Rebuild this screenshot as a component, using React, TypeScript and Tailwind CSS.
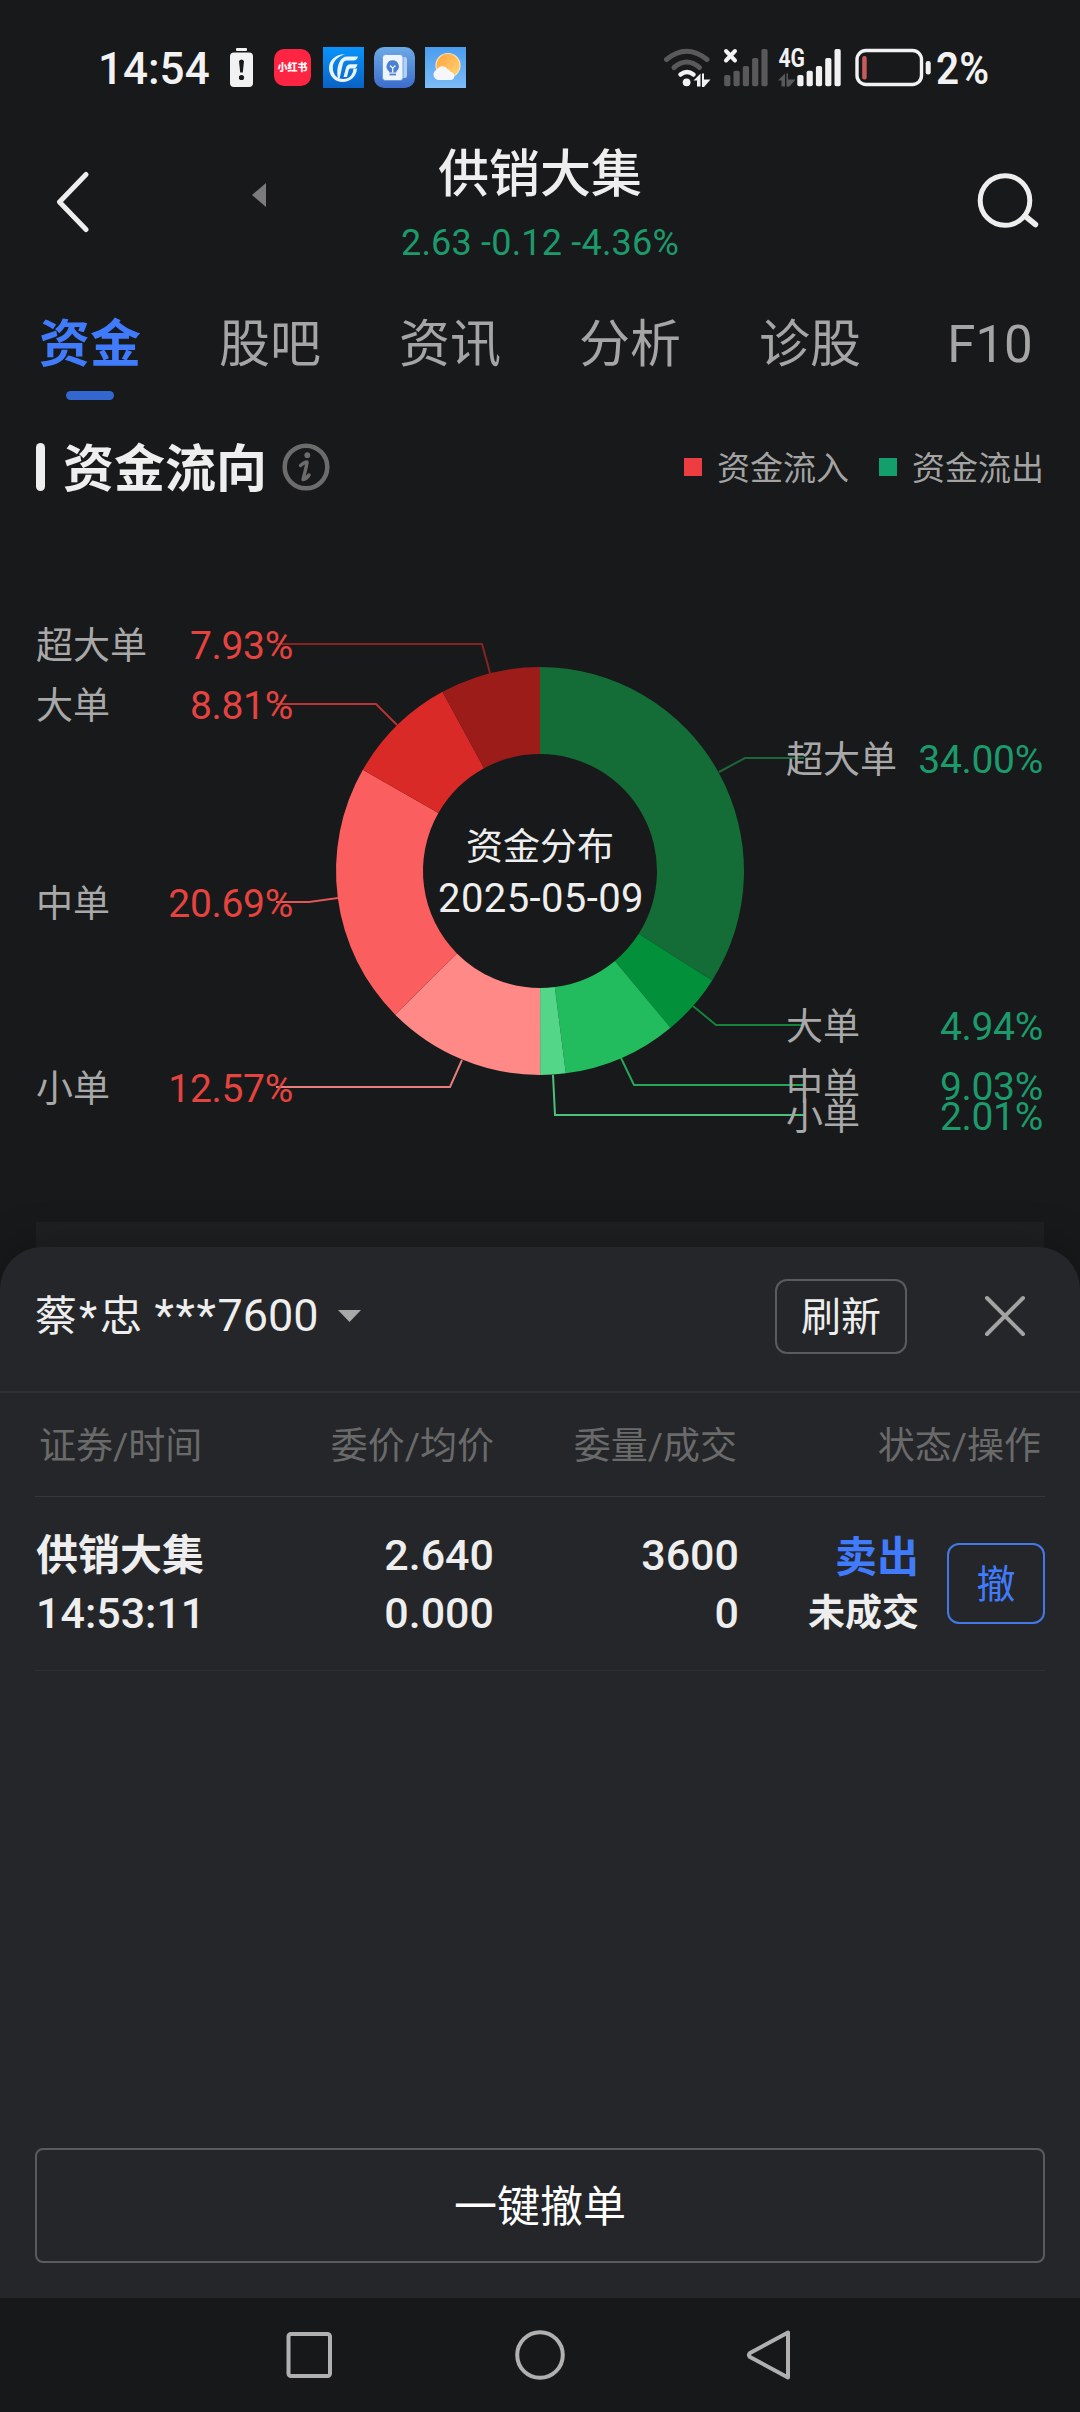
interface Slice {
  label: string;
  value: number;
  color: string;
  line: string;
  labelY: number;
  points: string;
}

const outflow: Slice[] = [
  { label: "超大单", value: 34.0, color: "#146c36", line: "#1c6638", labelY: 758, points: "719,772 745,758 804,758" },
  { label: "大单", value: 4.94, color: "#02913a", line: "#15833b", labelY: 1025, points: "693,1006 716,1025 804,1025" },
  { label: "中单", value: 9.03, color: "#22bb5e", line: "#27a658", labelY: 1085, points: "621,1058 634,1085 804,1085" },
  { label: "小单", value: 2.01, color: "#53d688", line: "#4fbf7c", labelY: 1115, points: "553,1075 555,1115 804,1115" },
];

const inflow: Slice[] = [
  { label: "小单", value: 12.57, color: "#ff8987", line: "#e57e7c", labelY: 1087, points: "462,1060 450,1087 276,1087" },
  { label: "中单", value: 20.69, color: "#fb5e5e", line: "#df5757", labelY: 902, points: "338,898 309,902 276,902" },
  { label: "大单", value: 8.81, color: "#d92a27", line: "#b93433", labelY: 704, points: "397,725 376,704 276,704" },
  { label: "超大单", value: 7.93, color: "#9c1c1a", line: "#842423", labelY: 644, points: "490,673 482,644 276,644" },
];

const tabs = ["资金", "股吧", "资讯", "分析", "诊股", "F10"];

const CX = 540;
const CY = 871;
const OUTER = 204;
const INNER = 117;

const point = (r: number, angle: number) =>
  `${(CX + r * Math.sin(angle)).toFixed(2)} ${(CY - r * Math.cos(angle)).toFixed(2)}`;

const arcPath = (start: number, end: number) => {
  const large = end - start > Math.PI ? 1 : 0;
  return `M${point(OUTER, start)} A${OUTER} ${OUTER} 0 ${large} 1 ${point(OUTER, end)} L${point(INNER, end)} A${INNER} ${INNER} 0 ${large} 0 ${point(INNER, start)} Z`;
};

function SignalBars({ x, color }: { x: number; color: string }) {
  const tops = [28, 23.7, 19, 11, 2];
  return (
    <g fill={color}>
      {tops.map((top, i) => (
        <rect key={top} x={x + i * 9.3} y={top} width="6.2" height={39.2 - top} rx="1.8" />
      ))}
    </g>
  );
}

function StatusBar() {
  return (
    <div className="flex h-[135px] items-center justify-between pl-[98px] pr-[90px]">
      <div className="flex items-center">
        <span className="w-[132px] pt-[2px] text-[44px] font-medium leading-none text-[#f2f2f2]">
          14:54
        </span>
        <svg className="h-[41px] w-[23px]" viewBox="0 0 23 41">
          <rect x="6" y="1" width="11" height="3" rx="1" fill="#f2f2f2" />
          <rect x="0" y="5.5" width="23" height="34.5" rx="4" fill="#f2f2f2" />
          <path d="M9 14q2.500-3 5 0l-1.200 11.500h-2.600z" fill="#17191a" />
          <circle cx="11.500" cy="30.500" r="2.600" fill="#17191a" />
        </svg>
        <div className="ml-[21px] flex h-[37px] w-[37px] items-center justify-center rounded-[10px] bg-[#fe2543] text-[10px] font-black leading-none text-white">
          小红书
        </div>
        <svg className="ml-3 h-[41px] w-[41px]" viewBox="0 0 41 41">
          <defs>
            <linearGradient id="brand" x1="0" y1="0" x2="0" y2="1">
              <stop offset="0" stopColor="#0a94fb" />
              <stop offset="1" stopColor="#0a62c4" />
            </linearGradient>
          </defs>
          <rect width="41" height="41" fill="url(#brand)" />
          {/* crescent, then the strokes of the mark */}
          <path
            d="M22 7.200C13 7 6 13 6 21c0 8 6 14 13.500 14 8 0 14-5.500 14.500-13.500h-3.500C30 28 26 32 20.500 32 14 32 9.800 27.500 9.800 20.500 9.800 14.500 14.500 9.500 22 7.200z"
            fill="#e8f4ff"
          />
          <path d="M15 31c-1.500-6-.5-12.500 2-17 1.700-3 4-4.500 7-4.500h11c-.6 2.800-2 3.900-4.500 3.900h-6.500c-2.600 0-3.600 1.400-4.300 4L16.700 31z" fill="#e8f4ff" />
          <path d="M20.500 30l2.300-8.500c.8-2.800 2-4.200 4.800-4.200h6.900c-.5 2.800-1.800 4.200-4.300 4.200h-2.400c-1.300 0-1.900.6-2.200 2L24 30z" fill="#e8f4ff" />
        </svg>
        <svg className="ml-[10px] h-[41px] w-[41px]" viewBox="0 0 41 41">
          <defs>
            <linearGradient id="tips" x1="0" y1="0" x2="0" y2="1">
              <stop offset="0" stopColor="#6caae6" />
              <stop offset="1" stopColor="#3c6ccb" />
            </linearGradient>
          </defs>
          <rect width="41" height="41" rx="10" fill="url(#tips)" />
          <rect x="25" y="10" width="8" height="21" rx="2.500" fill="#b5d0f2" />
          <rect x="8.500" y="7.500" width="20.500" height="26" rx="3" fill="#eef4fd" stroke="#5a92db" strokeWidth="0.800" />
          <path d="M18.700 13.200a6.200 6.200 0 0 0-3.600 11.200v1.100h7.200v-1.100a6.200 6.200 0 0 0-3.600-11.200z" fill="#4b80d3" />
          <path d="M16 18.500l2.700 2.700 2.700-2.700M18.700 21v4.500" stroke="#eef4fd" strokeWidth="1.300" fill="none" />
          <path d="M15.500 27.500h6.500" stroke="#4b80d3" strokeWidth="1.800" />
        </svg>
        <svg className="ml-[10px] h-[41px] w-[41px]" viewBox="0 0 41 41">
          <defs>
            <linearGradient id="sky" x1="0" y1="0" x2="0" y2="1">
              <stop offset="0" stopColor="#4a9df0" />
              <stop offset="1" stopColor="#7dbcf7" />
            </linearGradient>
            <linearGradient id="sun" x1="0" y1="0" x2="1" y2="1">
              <stop offset="0" stopColor="#ff9f3d" />
              <stop offset="1" stopColor="#ffd873" />
            </linearGradient>
          </defs>
          <rect width="41" height="41" fill="url(#sky)" />
          <circle cx="23" cy="18.500" r="12" fill="url(#sun)" stroke="#ffe2ae" strokeWidth="1.200" />
          <path d="M13 33a5.500 5.500 0 0 1-1-10.500 6 6 0 0 1 10.500-.5 4.500 4.500 0 0 1 3 3 4 4 0 0 1-.5 8z" fill="#f5f7fb" />
        </svg>
      </div>
      <div className="flex items-center">
        <svg className="h-[41px] w-[48px]" viewBox="0 0 48 41" fill="none" strokeLinecap="round">
          <path d="M3.500 12.500Q23.500-4 44 12.500" stroke="#59595b" strokeWidth="5" />
          <path d="M11 20.500Q23.500 9.500 36.500 20.500" stroke="#59595b" strokeWidth="5" />
          <path d="M17.500 27.500Q24 22.500 30.500 27.500" stroke="#f2f2f2" strokeWidth="4.500" />
          <circle cx="23.600" cy="35.300" r="3.900" fill="#f2f2f2" />
          <path d="M30.500 33.500l7-7v13h-3.500v-6zM41 26.500v6h6.500l-6.500 7.500h-2V26.500z" fill="#f2f2f2" />
        </svg>
        <svg className="ml-3 h-[41px] w-[45px]" viewBox="0 0 45 41">
          <path d="M3 4l9 9.500M12 4L3 13.500" stroke="#f2f2f2" strokeWidth="4" strokeLinecap="round" />
          <SignalBars x={1.2} color="#59595b" />
        </svg>
        <svg className="ml-[10px] h-[41px] w-[63px] overflow-visible" viewBox="0 0 63 41">
          <text x="0.500" y="20" fontSize="25.500" fontWeight="700" fill="#f2f2f2" textLength="26.500" lengthAdjust="spacingAndGlyphs">
            4G
          </text>
          <path d="M0 33.500l7-7v13H3.500v-6zM10 26.500v6h7.500L11.500 39.500H8.500V26.500z" fill="#59595b" />
          <SignalBars x={19.3} color="#f2f2f2" />
        </svg>
        <svg className="ml-[14px] h-[41px] w-[77px]" viewBox="0 0 77 41">
          <rect x="2" y="3.500" width="64.500" height="34" rx="9" fill="none" stroke="#f2f2f2" strokeWidth="3.400" />
          <rect x="7.200" y="9" width="4.500" height="23.500" rx="2" fill="#c95b5b" />
          <rect x="70.700" y="14" width="5" height="13.500" rx="2.300" fill="#f2f2f2" />
        </svg>
        <svg className="ml-1 h-[54px] w-[54px] overflow-visible" viewBox="0 0 54 54">
          <text x="0" y="43" fontSize="44" fontWeight="600" fill="#f2f2f2" textLength="53" lengthAdjust="spacingAndGlyphs">
            2%
          </text>
        </svg>
      </div>
    </div>
  );
}

function Header() {
  return (
    <div className="flex h-[135px] items-center pl-[54px] pr-[40px]">
      <svg className="mb-[2px] h-[62px] w-[38px]" viewBox="0 0 38 62" fill="none">
        <path d="M32 3.500L5.500 31 32 58.500" stroke="#eeeeee" strokeWidth="5" strokeLinecap="round" strokeLinejoin="round" />
      </svg>
      <svg className="mb-[15px] ml-[160px] h-[24px] w-[14px]" viewBox="0 0 14 24">
        <path d="M14 0v24L0 12z" fill="#7b7b7b" />
      </svg>
      <div className="flex w-[548px] flex-col items-center pt-[6px]">
        <h1 className="text-[51px] font-medium leading-[58px] text-[#eeeeee]">供销大集</h1>
        <p className="mt-[17px] text-[36px] leading-[44px] tracking-[0.2px] text-[#1d9a6c]">2.63 -0.12 -4.36%</p>
      </div>
      <svg className="mb-[1px] ml-auto h-[60px] w-[64px]" viewBox="0 0 64 60" fill="none">
        <circle cx="29" cy="28.500" r="24.800" stroke="#eeeeee" strokeWidth="5" />
        <path d="M49 44l10.500 8.500" stroke="#eeeeee" strokeWidth="5.500" strokeLinecap="round" />
      </svg>
    </div>
  );
}

function Tabs() {
  return (
    <div className="grid h-[142px] grid-cols-6 pt-[45px]">
      {tabs.map((tab, index) => (
        <div key={tab} className="flex flex-col items-center">
          <span
            className={
              index === 0
                ? "text-[51px] font-bold leading-[60px] text-[#407bfb]"
                : "text-[51px] leading-[60px] text-[#a5a5a5]"
            }
          >
            {tab}
          </span>
          {index === 0 && <div className="mt-4 h-[9px] w-[48px] rounded-full bg-[#3366ce]" />}
        </div>
      ))}
    </div>
  );
}

function SectionTitle() {
  return (
    <div className="flex h-[110px] items-center px-9">
      <div className="h-[48px] w-[9px] rounded-full bg-[#eeeeee]" />
      <h2 className="ml-[18px] pt-[5px] text-[51px] font-bold leading-[60px] text-[#eeeeee]">资金流向</h2>
      <svg className="ml-[15px] h-[48px] w-[48px]" viewBox="0 0 48 48" fill="none" stroke="#6c6c6c">
        <circle cx="24" cy="24" r="21.300" strokeWidth="4.500" />
        <circle cx="25.300" cy="12.200" r="2.900" fill="#6c6c6c" stroke="none" />
        <path d="M18.500 22.500q4-3.500 6.500-3.500-.5 5-4 17.500 3.500-.5 6-4.500" strokeWidth="3.400" strokeLinecap="round" strokeLinejoin="round" />
      </svg>
      <div className="ml-auto flex items-center text-[33px] leading-[44px] text-[#a3a3a3]">
        <div className="h-[18px] w-[18px] bg-[#ed3d41]" />
        <span className="ml-[15px] pt-[3px]">资金流入</span>
        <div className="ml-[30px] h-[18px] w-[18px] bg-[#139e6c]" />
        <span className="ml-[15px] pt-[3px]">资金流出</span>
      </div>
    </div>
  );
}

function FlowChart() {
  const slices = [...outflow, ...inflow];
  const total = slices.reduce((sum, s) => sum + s.value, 0);
  let angle = 0;

  return (
    <svg className="block h-[700px] w-full" viewBox="0 522 1080 700">
      {slices.map((slice, index) => {
        const start = angle;
        angle += (slice.value / total) * Math.PI * 2;
        return <path key={index} d={arcPath(start, angle)} fill={slice.color} />;
      })}
      {slices.map((slice, index) => (
        <polyline key={index} points={slice.points} fill="none" stroke={slice.line} strokeWidth="2" />
      ))}
      <g fontSize="37" fill="#a8a8a8">
        {inflow.map((s) => (
          <text key={s.label} x="36" y={s.labelY + 15}>
            {s.label}
          </text>
        ))}
        {outflow.map((s) => (
          <text key={s.label} x="786" y={s.labelY + 15}>
            {s.label}
          </text>
        ))}
      </g>
      <g fontSize="39" textAnchor="end" letterSpacing="-0.3">
        {inflow.map((s) => (
          <text key={s.label} x="293" y={s.labelY + 15} fill="#e5433f">
            {s.value.toFixed(2)}%
          </text>
        ))}
        {outflow.map((s) => (
          <text key={s.label} x="1043" y={s.labelY + 15} fill="#1d9a6c">
            {s.value.toFixed(2)}%
          </text>
        ))}
      </g>
      <g textAnchor="middle" fill="#eeeeee">
        <text x="540" y="860" fontSize="37">
          资金分布
        </text>
        <text x="541" y="912" fontSize="40" letterSpacing="0.4">
          2025-05-09
        </text>
      </g>
    </svg>
  );
}

function OrderSheet() {
  return (
    <div className="flex h-[1051px] flex-col rounded-t-[42px] bg-[#242629] shadow-[0_-4px_40px_rgba(0,0,0,0.25)]">
      <div className="flex h-[146px] items-center border-b-2 border-[#2f3033] px-[35px] pb-[6px]">
        <span className="text-[42px] leading-[60px] text-[#eeeeee]">
          蔡<span className="pl-[2px] tracking-[3px]">*</span>忠{" "}
          <span className="text-[45px]">
            <span className="pl-[2px] tracking-[1.6px]">***</span>7600
          </span>
        </span>
        <svg className="ml-[19px] h-[12px] w-[23px]" viewBox="0 0 23 12">
          <path d="M0 0h23L11.500 12z" fill="#a9a9a9" />
        </svg>
        <button className="ml-auto h-[75px] w-[132px] rounded-xl border-2 border-[#5a5b5e] pt-[3px] text-[40px] leading-none text-[#eeeeee]">
          刷新
        </button>
        <svg className="ml-[76px] mr-[18px] h-[44px] w-[44px]" viewBox="0 0 44 44">
          <path d="M4 4l36 36M40 4L4 40" stroke="#a3a3a3" strokeWidth="4" strokeLinecap="round" />
        </svg>
      </div>

      <div className="mx-[35px] grid h-[104px] grid-cols-[237px_222px_243px_1fr] items-center border-b border-[#37383a] pt-[4px] text-[37px] leading-none text-[#6a6a6a]">
        <span className="pl-1">证券/时间</span>
        <span className="text-right">委价/均价</span>
        <span className="text-right">委量/成交</span>
        <span className="pr-1 text-right">状态/操作</span>
      </div>

      <div className="mx-[35px] grid h-[174px] grid-cols-[237px_222px_245px_180px_1fr] items-center border-b border-[#2f3033] text-[43px] font-medium leading-[58px] text-[#eeeeee]">
        <div className="pl-[1px]">
          <p className="pt-[2px] text-[42px] font-semibold leading-[56px]">供销大集</p>
          <p>14:53:11</p>
        </div>
        <div className="text-right">
          <p>2.640</p>
          <p>0.000</p>
        </div>
        <div className="text-right">
          <p>3600</p>
          <p>0</p>
        </div>
        <div className="text-right">
          <p className="pt-[6px] text-[42px] font-bold leading-[56px] text-[#407bfb]">卖出</p>
          <p className="pb-[1px] text-[37px] font-semibold leading-[56px]">未成交</p>
        </div>
        <button className="ml-auto h-[81px] w-[98px] rounded-xl border-2 border-[#4379e6] pt-[3px] text-[39px] font-normal leading-none text-[#407bfb]">
          撤
        </button>
      </div>

      <button className="mx-[35px] mb-[35px] mt-auto h-[115px] rounded-lg border-2 border-[#5a5b5e] pt-[3px] text-[43px] leading-none text-white">
        一键撤单
      </button>
    </div>
  );
}

function NavBar() {
  return (
    <div className="flex h-[114px] items-center justify-center bg-[#17181a]">
      <svg className="h-[54px] w-[510px]" viewBox="285 0 510 54" fill="none" stroke="#b0b0b0" strokeWidth="4">
        <rect x="288.500" y="6" width="41.500" height="42" rx="2.500" />
        <circle cx="540" cy="27" r="22.800" />
        <path d="M788 4.500v45L750 29q-2-2 0-4z" strokeLinejoin="round" />
      </svg>
    </div>
  );
}

function App() {
  return (
    <div className="min-h-[2412px] w-[1080px] overflow-hidden bg-[#17191a] font-[Roboto,'Noto_Sans_CJK_SC',sans-serif]">
      <StatusBar />
      <Header />
      <Tabs />
      <SectionTitle />
      <FlowChart />
      <div className="mx-9 h-[25px] bg-[#1f2021]" />
      <OrderSheet />
      <NavBar />
    </div>
  );
}

export default App;
